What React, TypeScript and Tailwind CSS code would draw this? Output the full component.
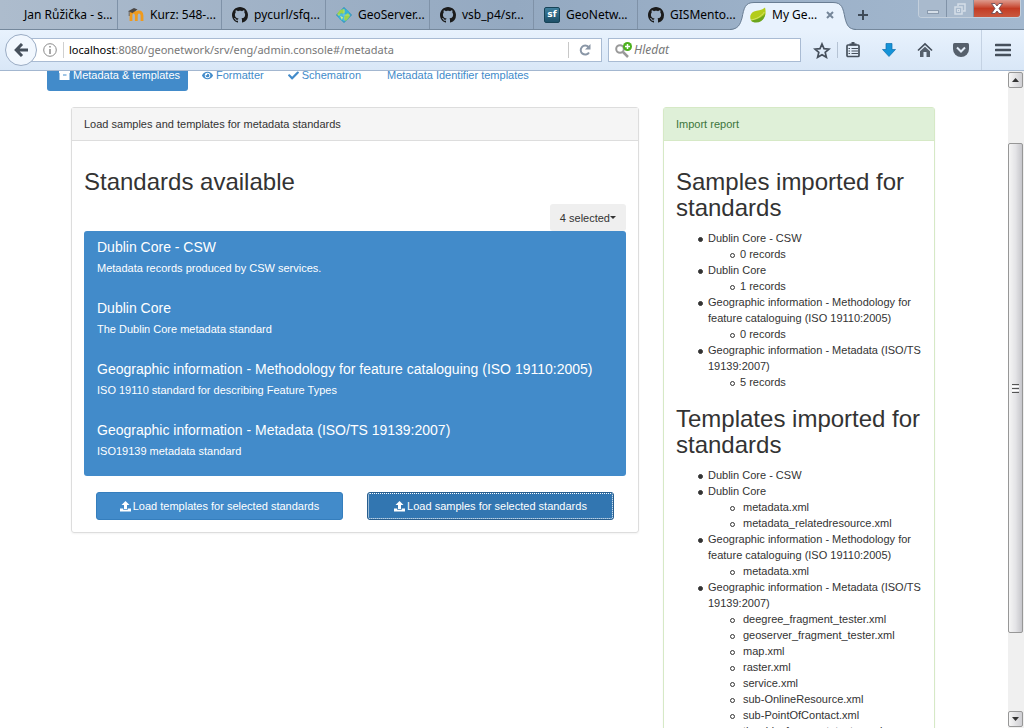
import React from 'react';
import { FaCheck, FaEye } from 'react-icons/fa';

const ui = "font-['Noto_Sans','Open_Sans',sans-serif]";

function GithubIcon() {
  return (
    <svg viewBox="0 0 16 16" className="size-4 shrink-0" fill="#1b1b1b" aria-hidden="true">
      <path d="M8 0C3.58 0 0 3.58 0 8c0 3.54 2.29 6.53 5.47 7.59.4.07.55-.17.55-.38 0-.19-.01-.82-.01-1.49-2.01.37-2.53-.49-2.69-.94-.09-.23-.48-.94-.82-1.13-.28-.15-.68-.52-.01-.53.63-.01 1.08.58 1.23.82.72 1.21 1.87.87 2.33.66.07-.52.28-.87.51-1.07-1.78-.2-3.64-.89-3.64-3.95 0-.87.31-1.59.82-2.15-.08-.2-.36-1.02.08-2.12 0 0 .67-.21 2.2.82.64-.18 1.32-.27 2-.27s1.36.09 2 .27c1.53-1.04 2.2-.82 2.2-.82.44 1.1.16 1.92.08 2.12.51.56.82 1.27.82 2.15 0 3.07-1.87 3.75-3.65 3.95.29.25.54.73.54 1.48 0 1.07-.01 1.93-.01 2.2 0 .21.15.46.55.38A8.01 8.01 0 0 0 16 8c0-4.42-3.58-8-8-8z" />
    </svg>
  );
}

function MoodleIcon() {
  return (
    <svg viewBox="0 0 16 16" className="size-4 shrink-0" fill="none" aria-hidden="true">
      <path d="M3 14V8.5Q3 5 5.500 5T8.300 8.500V14M8.300 8.500Q8.300 5 11 5T14 8.500V14" stroke="#f09a1c" strokeWidth="2.800" />
      <path d="M0 4.200 6 1 9.500 2.500 4.500 6Z" fill="#4b4745" />
      <path d="M1.200 4.500V9" stroke="#5c5044" strokeWidth=".8" />
    </svg>
  );
}

function GlobeIcon() {
  return (
    <svg viewBox="0 0 16 16" className="size-4 shrink-0" aria-hidden="true">
      <path d="M8 0 16 8 8 16 0 8Z" fill="#2390ba" />
      <circle cx="8" cy="8" r="6" fill="#37b3d8" />
      <path d="M4 3 8 2 9 5 7 7 5 6 3 9 1 7ZM9 8 12 6 14 9 11 13 9 14 8 11Z" fill="#9ed34b" />
      <path d="M4 9 7 10 6 13Z" fill="#d8ef8a" />
      <path d="M1 8H15M8 1V15" stroke="#d9f5ff" strokeWidth=".6" opacity=".5" />
    </svg>
  );
}

function SourceforgeIcon() {
  return (
    <span className="flex size-4 shrink-0 items-center justify-center rounded-xs border border-[#174357] bg-linear-to-b from-[#3f7f9d] to-[#1d4f68] font-['DejaVu_Sans'] text-[9px] leading-none font-bold text-white">
      sf
    </span>
  );
}

function LeafIcon() {
  return (
    <svg viewBox="0 0 16 16" className="size-4 shrink-0" aria-hidden="true">
      <path d="M15 .5C13 3 8 3 4 4.500 0 6.500-.5 10 1 13.500 4 15.800 10 15.500 13 12 16 8.500 16 4 15 .5Z" fill="#b3cc1b" />
      <path d="M1 13.500C5 13 12 11 15.300 6.500 15 11 12 15.500 6 15.500 4 15.500 2 15 1 13.500Z" fill="#6ba51c" />
      <path d="M1 13C6 12 11 10 14.300 5" stroke="#eaf3a0" strokeWidth=".6" fill="none" />
    </svg>
  );
}

const tabs = [
  { title: 'Jan Růžička - s...', icon: null },
  { title: 'Kurz: 548-...', icon: <MoodleIcon /> },
  { title: 'pycurl/sfq...', icon: <GithubIcon /> },
  { title: 'GeoServer...', icon: <GlobeIcon /> },
  { title: 'vsb_p4/sr...', icon: <GithubIcon /> },
  { title: 'GeoNetw...', icon: <SourceforgeIcon /> },
  { title: 'GISMento...', icon: <GithubIcon /> },
];

function TabStrip() {
  return (
    <div className="relative flex h-[30px] items-stretch border-b border-[#75889c] bg-linear-to-r from-[#adbccd] via-[#94a9c1] to-[#a3b8cf] pl-[14px]">
      {tabs.map((tab, i) => (
        <button
          key={tab.title}
          type="button"
          className={`flex w-[104px] shrink-0 items-center gap-[6px] pl-[10px] text-left text-[12px] whitespace-nowrap text-black ${i < 6 ? 'border-r border-[#7f92a8]' : ''}`}
        >
          {tab.icon}
          {tab.title}
        </button>
      ))}
      <div className="relative -mb-px flex w-[106px] shrink-0 items-center text-[12px] text-black">
        <svg viewBox="0 0 126 30" className="absolute top-0 -left-3 h-[30px] w-[126px]" aria-hidden="true">
          <path d="M0 30C8 29 10 25 12 18C14 8 15 2.500 24 2.500H103C112 2.500 113 8 115 18C117 26 119 29 126 30Z" fill="#e8f2fd" />
          <path d="M0 29.500C8 29 10 25 12 18C14 8 15 2.500 24 2.500H103C112 2.500 113 8 115 18C117 26 119 29 126 29.500" fill="none" stroke="#697d93" />
        </svg>
        <button type="button" className="relative flex items-center gap-[6px] pl-2 whitespace-nowrap">
          <LeafIcon />
          My Ge...
        </button>
        <button type="button" aria-label="Close tab" className="relative ml-[9px]">
          <svg viewBox="0 0 8 8" className="size-2" aria-hidden="true">
            <path d="M1 1 7 7M7 1 1 7" stroke="#758699" strokeWidth="2" />
          </svg>
        </button>
      </div>
      <button type="button" aria-label="New tab" className="ml-[6px] px-1">
        <svg viewBox="0 0 10 10" className="size-[10px]" aria-hidden="true">
          <path d="M5 0V10M0 5H10" stroke="#3f4b58" strokeWidth="2" />
        </svg>
      </button>
      <div className="absolute top-0 right-[3px] flex h-[18px] overflow-hidden rounded-b border border-t-0 border-[#c3cfdc]">
        <button type="button" aria-label="Minimize" className="flex w-7 items-center justify-center border-r border-[#8193a8] bg-[#a9bacd]">
          <svg viewBox="0 0 12 12" className="size-3" aria-hidden="true">
            <rect x=".5" y="7.500" width="11" height="3" fill="#d5dee8" stroke="#8b9bae" />
          </svg>
        </button>
        <button type="button" aria-label="Restore" className="flex w-[27px] items-center justify-center border-r border-[#8193a8] bg-[#a9bacd]">
          <svg viewBox="0 0 12 12" className="size-3" fill="none" stroke="#d5dee8" strokeWidth="1.500" aria-hidden="true">
            <path d="M4 3V1H11V8H9" />
            <rect x="1" y="4" width="7" height="7" />
            <rect x="3.500" y="6.500" width="2" height="2" strokeWidth="1" />
          </svg>
        </button>
        <button type="button" aria-label="Close window" className="flex w-[46px] items-center justify-center bg-linear-to-b from-[#dd9a8d] via-[#c33b23] to-[#c9583f]">
          <svg viewBox="0 0 12 11" className="h-[11px] w-3" aria-hidden="true">
            <path d="M.5 .5H4L6 3 8 .5H11.500L8 5.500 11.500 10.500H8L6 8 4 10.500H.5L4 5.500Z" fill="#fff" stroke="#5d4450" strokeWidth=".8" />
          </svg>
        </button>
      </div>
    </div>
  );
}

function Toolbar() {
  return (
    <div className="flex h-[41px] items-center border-b border-[#a3b7d0] bg-linear-to-b from-[#e8f2fd] to-[#d9e7f7] pl-[5px]">
      <button type="button" aria-label="Back" className="z-10 flex size-8 shrink-0 items-center justify-center rounded-full border border-[#9aacc4] bg-[#f1f7fe]">
        <svg viewBox="0 0 14 14" className="size-[14px]" fill="none" stroke="#46505c" strokeWidth="3" aria-hidden="true">
          <path d="M8 1 2.200 7 8 13M3 7H14" />
        </svg>
      </button>
      <div className="-ml-2 flex h-6 flex-1 items-center border border-[#a9bbd3] bg-white pl-[13px]">
        <svg viewBox="0 0 14 14" className="size-[14px] shrink-0" fill="none" stroke="#8a8a8a" aria-hidden="true">
          <circle cx="7" cy="7" r="6.300" />
          <path d="M7 3V4.500M7 6V11" strokeWidth="1.500" />
        </svg>
        <span className="ml-[6px] h-4 w-px shrink-0 bg-[#d0d0d0]" />
        <div className="min-w-0 flex-1 pl-[5px] text-[11px] whitespace-nowrap text-[#777]">
          <span className="text-black">localhost</span>:8080/geonetwork/srv/eng/admin.console#/metadata
        </div>
        <span className="h-4 w-px shrink-0 bg-[#c8c8c8]" />
        <button type="button" aria-label="Reload" className="flex w-8 items-center justify-center">
          <svg viewBox="0 0 12 12" className="size-3" aria-hidden="true">
            <path d="M9.500 3A4.500 4.500 0 1 0 10 8.500" fill="none" stroke="#8996a6" strokeWidth="2" />
            <path d="M11.500 0V5.500H6Z" fill="#8996a6" />
          </svg>
        </button>
      </div>
      <label className="ml-[6px] flex h-6 w-[193px] items-center border border-[#a9bbd3] bg-white pl-[6px]">
        <svg viewBox="0 0 18 16" className="h-4 w-[18px] shrink-0" aria-hidden="true">
          <circle cx="5" cy="7" r="3.800" fill="none" stroke="#999" strokeWidth="2" />
          <path d="M8 10 13 15" stroke="#999" strokeWidth="2.500" />
          <circle cx="12.500" cy="4.500" r="4.500" fill="#4cb01c" />
          <path d="M12.500 2V7M10 4.500H15" stroke="#fff" strokeWidth="1.500" />
        </svg>
        <input type="text" aria-label="Hledat" placeholder="Hledat" className="min-w-0 flex-1 pl-px text-[12px] italic outline-none placeholder:text-[#777]" />
      </label>
      <button type="button" aria-label="Bookmark this page" className="ml-3">
        <svg viewBox="0 0 18 17" className="h-[17px] w-[18px]" aria-hidden="true">
          <path d="M9 2 11 6.700 16 7.100 12.200 10.400 13.400 15.300 9 12.700 4.600 15.300 5.800 10.400 2 7.100 7 6.700Z" fill="none" stroke="#46505c" strokeWidth="1.700" />
        </svg>
      </button>
      <span className="mx-[6px] h-4 w-px bg-[#b5c3d4]" />
      <button type="button" aria-label="Bookmarks" className="ml-px">
        <svg viewBox="0 0 16 16" className="size-4" fill="none" stroke="#46505c" aria-hidden="true">
          <rect x="2" y="3" width="12" height="11.500" rx="1" fill="#e2edf9" strokeWidth="1.700" />
          <path d="M4.500 2.500H11.500M6.500 1H9.500" strokeWidth="1.800" />
          <path d="M3.500 6.500H5M6.500 6.500H13M3.500 9H5M6.500 9H13M3.500 11.500H5M6.500 11.500H13" strokeWidth="1" />
        </svg>
      </button>
      <button type="button" aria-label="Downloads" className="ml-5">
        <svg viewBox="0 0 16 16" className="size-4" aria-hidden="true">
          <path d="M5 1.500H11V7.500H14.500L8 14.500 1.500 7.500H5Z" fill="#1493d8" stroke="#0d6fae" strokeWidth=".7" />
        </svg>
      </button>
      <button type="button" aria-label="Home" className="ml-5">
        <svg viewBox="0 0 16 16" className="size-4" aria-hidden="true">
          <path d="M1 8.500 8 2 15 8.500" fill="none" stroke="#46505c" strokeWidth="1.700" />
          <path d="M3 9.300 8 4.800 13 9.300V15H9.500V10H6.500V15H3Z" fill="#56606c" />
        </svg>
      </button>
      <button type="button" aria-label="Pocket" className="ml-5">
        <svg viewBox="0 0 16 16" className="size-4" aria-hidden="true">
          <path d="M1.500 1H14.500Q16 1 16 2.500V7A8 8 0 0 1 0 7V2.500Q0 1 1.500 1Z" fill="#56606c" />
          <path d="M4 5.500 8 9.500 12 5.500" fill="none" stroke="#e3edf9" strokeWidth="2" />
        </svg>
      </button>
      <span className="ml-3 h-full w-px bg-[#c4d2e3]" />
      <button type="button" aria-label="Open menu" className="mr-[13px] ml-[13px]">
        <svg viewBox="0 0 16 14" className="h-[14px] w-4" aria-hidden="true">
          <path d="M1 2H15M1 7H15M1 12H15" stroke="#46505c" strokeWidth="2.600" strokeLinecap="round" />
        </svg>
      </button>
    </div>
  );
}

function ArchiveIcon() {
  return (
    <svg viewBox="0 0 11 11" className="size-[11px]" aria-hidden="true">
      <path d="M0 0H11V3H.500V3H10.500V10H.5V3H0Z" fill="#fff" />
      <path d="M4 5H7.500" stroke="#428bca" />
    </svg>
  );
}

function UploadIcon() {
  return (
    <svg viewBox="0 0 11 11" className="size-[11px]" fill="#fff" aria-hidden="true">
      <path d="M5.500 0 9.500 4H7V8H4V4H1.500ZM0 7.500H3.200V8.800H7.800V7.500H11V10.500H0Z" />
    </svg>
  );
}

const standards = [
  ['Dublin Core - CSW', 'Metadata records produced by CSW services.'],
  ['Dublin Core', 'The Dublin Core metadata standard'],
  ['Geographic information - Methodology for feature cataloguing (ISO 19110:2005)', 'ISO 19110 standard for describing Feature Types'],
  ['Geographic information - Metadata (ISO/TS 19139:2007)', 'ISO19139 metadata standard'],
];

const samples = [
  { name: 'Dublin Core - CSW', items: ['0 records'] },
  { name: 'Dublin Core', items: ['1 records'] },
  { name: 'Geographic information - Methodology for feature cataloguing (ISO 19110:2005)', items: ['0 records'] },
  { name: 'Geographic information - Metadata (ISO/TS 19139:2007)', items: ['5 records'] },
];

const templates = [
  { name: 'Dublin Core - CSW', items: [] },
  { name: 'Dublin Core', items: ['metadata.xml', 'metadata_relatedresource.xml'] },
  { name: 'Geographic information - Methodology for feature cataloguing (ISO 19110:2005)', items: ['metadata.xml'] },
  {
    name: 'Geographic information - Metadata (ISO/TS 19139:2007)',
    items: [
      'deegree_fragment_tester.xml',
      'geoserver_fragment_tester.xml',
      'map.xml',
      'raster.xml',
      'service.xml',
      'sub-OnlineResource.xml',
      'sub-PointOfContact.xml',
      'thredds_fragment_tester.xml',
      'vector.xml',
    ],
  },
];

type Group = { name: string; items: string[] };

const bullet = "before:-ml-[10px] before:inline-block before:size-[5px] before:rounded-full before:border before:border-[#333] before:align-middle before:content-['']";

function Report({ title, groups, itemGap }: { title: string; groups: Group[]; itemGap: string }) {
  return (
    <section className="mt-4">
      <h1 className="mb-[9px] text-[24px] leading-[26px]">{title}</h1>
      <ul className="pl-8">
        {groups.map((group) => (
          <li key={group.name} className={`${bullet} before:mr-[5px] before:bg-[#333]`}>
            {group.name}
            {group.items.length > 0 && (
              <ul className="pl-8">
                {group.items.map((item) => (
                  <li key={item} className={`${bullet} before:bg-white ${itemGap}`}>
                    {item}
                  </li>
                ))}
              </ul>
            )}
          </li>
        ))}
      </ul>
    </section>
  );
}

function ScrollBar() {
  const button = 'flex h-4 shrink-0 items-center justify-center rounded-xs border border-[#979797] bg-linear-to-r from-[#f6f6f6] to-[#cfcfd3]';
  return (
    <div className="flex w-4 shrink-0 flex-col bg-[#f0f0f0] pt-px pr-px pb-px">
      <button type="button" aria-label="Scroll up" className={button}>
        <svg viewBox="0 0 7 4" className="h-1 w-[7px]" aria-hidden="true">
          <path d="M0 4 3.500 0 7 4Z" fill="#333" />
        </svg>
      </button>
      <div className="flex-[55]" />
      <div className="flex flex-[490] flex-col items-center justify-center gap-px rounded-xs border border-[#979797] bg-linear-to-r from-[#f5f5f5] via-[#e4e4e7] to-[#c6c6cb]">
        <span className="h-px w-[7px] bg-[#555]" />
        <span className="h-px w-[7px] bg-white" />
        <span className="h-px w-[7px] bg-[#555]" />
        <span className="h-px w-[7px] bg-white" />
        <span className="h-px w-[7px] bg-[#555]" />
      </div>
      <div className="flex-[78]" />
      <button type="button" aria-label="Scroll down" className={button}>
        <svg viewBox="0 0 7 4" className="h-1 w-[7px]" aria-hidden="true">
          <path d="M0 0H7L3.500 4Z" fill="#333" />
        </svg>
      </button>
    </div>
  );
}

export default function App() {
  return (
    <div className="flex h-screen flex-col overflow-hidden bg-white">
      <header className={`shrink-0 ${ui}`}>
        <TabStrip />
        <Toolbar />
      </header>
      <div className="flex min-h-0 flex-1">
        <main className="min-w-0 flex-1 overflow-hidden pr-[49px] pl-[47px] font-['Liberation_Sans',Arial,sans-serif] text-[11px] leading-4 text-[#333]">
          <nav className="-mt-3 flex items-center text-[#428bca]">
            <a href="#metadata" className="flex items-center gap-[3px] rounded-[3px] bg-[#428bca] py-2 pr-2 pl-3 text-white">
              <ArchiveIcon />
              Metadata &amp; templates
            </a>
            <a href="#formatter" className="ml-[2px] flex items-center gap-[3px] px-3 py-2">
              <FaEye className="size-[11px]" />
              Formatter
            </a>
            <a href="#schematron" className="flex items-center gap-[3px] px-3 py-2">
              <FaCheck className="size-[11px]" />
              Schematron
            </a>
            <a href="#identifiers" className="ml-[2px] px-3 py-2">
              Metadata Identifier templates
            </a>
          </nav>
          <div className="mt-4 grid grid-cols-12 items-start gap-6 px-6">
            <section className="col-span-8 rounded-[3px] border border-[#ddd] shadow-xs">
              <h2 className="border-b border-[#ddd] bg-[#f5f5f5] px-3 py-2">Load samples and templates for metadata standards</h2>
              <div className="p-3">
                <h1 className="mt-4 mb-[9px] text-[24px] leading-[26px]">Standards available</h1>
                <div className="flex justify-end">
                  <button type="button" className="flex h-[27px] items-center rounded-[3px] bg-[#efefef] px-[10px]">
                    4 selected
                    <span className="border-x-[3px] border-t-[3px] border-x-transparent border-t-[#333]" />
                  </button>
                </div>
                <ul className="rounded-[3px] bg-[#428bca] pb-px text-white">
                  {standards.map(([name, description]) => (
                    <li key={name} className="px-[13px] pt-2 pb-4">
                      <h4 className="mb-1 text-[14px] leading-[17px]">{name}</h4>
                      <p>{description}</p>
                    </li>
                  ))}
                </ul>
                <div className="mt-4 grid grid-cols-2 gap-6 px-3">
                  <button type="button" className="flex h-7 items-center justify-center gap-[2px] rounded-[3px] border border-[#357ebd] bg-[#428bca] text-white">
                    <UploadIcon />
                    Load templates for selected standards
                  </button>
                  <button type="button" className="flex h-7 items-center justify-center gap-[2px] rounded-[3px] border border-[#285e8e] bg-[#3276b1] text-white outline-1 -outline-offset-2 outline-white outline-dotted">
                    <UploadIcon />
                    Load samples for selected standards
                  </button>
                </div>
              </div>
            </section>
            <section className="col-span-4 rounded-[3px] border border-[#d6e9c6] shadow-xs">
              <h2 className="border-b border-[#d6e9c6] bg-[#dff0d8] px-3 py-2 text-[#3c763d]">Import report</h2>
              <div className="p-3">
                <Report title="Samples imported for standards" groups={samples} itemGap="before:mr-[5px]" />
                <Report title="Templates imported for standards" groups={templates} itemGap="before:mr-2" />
              </div>
            </section>
          </div>
        </main>
        <ScrollBar />
      </div>
    </div>
  );
}
